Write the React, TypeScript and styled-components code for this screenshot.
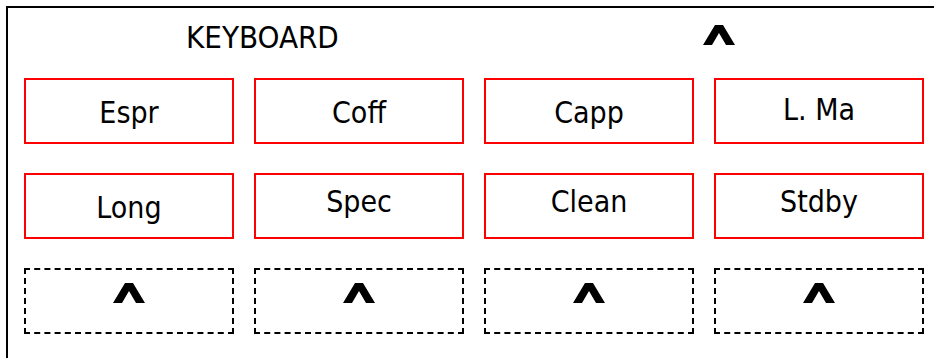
import styled, { createGlobalStyle } from "styled-components";

const GlobalStyle = createGlobalStyle`
	html, body {
		margin: 0;
		padding: 0;
		background: #fff;
		overflow: hidden;
	}
	body {
		font-family: "DejaVu Sans Condensed", "DejaVu Sans", sans-serif;
		font-stretch: semi-condensed;
		color: #000;
	}
`;

const Frame = styled.div`
	margin: 6px 0 0 6px;
	width: 960px;
	height: 354px;
	border: 2px solid #000;
	box-sizing: border-box;
	padding: 14px 0 0 16px;
`;

const Header = styled.div`
	display: flex;
	align-items: flex-start;
	height: 30px;
	margin-bottom: 26px;
`;

const Title = styled.h1`
	margin: 0 0 0 162px;
	font-size: 31px;
	font-weight: normal;
	line-height: 30px;
`;

const CaretBox = styled.span<{ $top: number; $left: number }>`
	display: flex;
	margin-top: ${(p) => p.$top}px;
	margin-left: ${(p) => p.$left}px;
`;

const KeyGrid = styled.div`
	display: flex;
	flex-direction: column;
	gap: 29px;
`;

const Row = styled.div`
	display: grid;
	grid-template-columns: repeat(4, 210px);
	column-gap: 20px;
`;

const Key = styled.button<{ $lift: number }>`
	height: 66px;
	box-sizing: border-box;
	border: 2px solid #ff0000;
	background: #fff;
	display: flex;
	justify-content: center;
	align-items: flex-start;
	padding: ${(p) => 18 - p.$lift}px 0 0 0;
	font-family: inherit;
	font-stretch: inherit;
	font-size: 30px;
	line-height: 30px;
	color: #000;
	cursor: pointer;
`;

const Slot = styled.div`
	height: 66px;
	box-sizing: border-box;
	border: 2px dashed #000;
	display: flex;
	justify-content: center;
	align-items: flex-start;
	padding-top: 13px;
`;

function Caret() {
	return (
		<svg width="32" height="20" viewBox="0 0 32 20">
			<polygon points="0,20 12,0 20,0 32,20 23,20 16,8 9,20" fill="#000" />
		</svg>
	);
}

const keys = [
	[
		{ label: "Espr", lift: 0 },
		{ label: "Coff", lift: 0 },
		{ label: "Capp", lift: 0 },
		{ label: "L. Ma", lift: 3 },
	],
	[
		{ label: "Long", lift: 0 },
		{ label: "Spec", lift: 6 },
		{ label: "Clean", lift: 6 },
		{ label: "Stdby", lift: 6 },
	],
];

function App() {
	return (
		<>
			<GlobalStyle />
			<Frame>
				<Header>
					<Title>KEYBOARD</Title>
					<CaretBox $top={3} $left={364}>
						<Caret />
					</CaretBox>
				</Header>
				<KeyGrid>
					{keys.map((row, i) => (
						<Row key={i}>
							{row.map((k) => (
								<Key key={k.label} $lift={k.lift}>
									{k.label}
								</Key>
							))}
						</Row>
					))}
					<Row>
						{[0, 1, 2, 3].map((i) => (
							<Slot key={i}>
								<Caret />
							</Slot>
						))}
					</Row>
				</KeyGrid>
			</Frame>
		</>
	);
}

export default App;
